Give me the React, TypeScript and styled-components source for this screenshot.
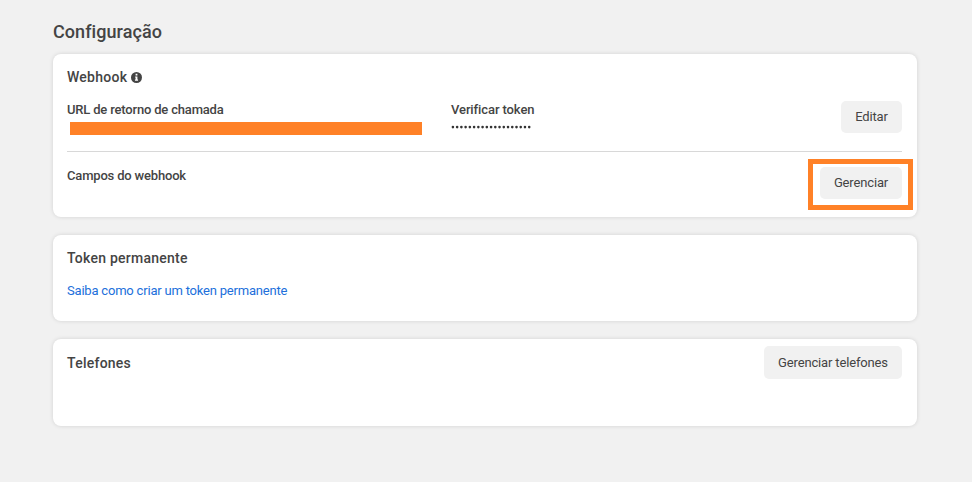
import React from "react";
import styled, { createGlobalStyle } from "styled-components";

const GlobalStyle = createGlobalStyle`
  *, *::before, *::after { box-sizing: border-box; }
  body {
    margin: 0;
    background: #f1f1f1;
    color: #444;
    font-family: Roboto, "Liberation Sans", sans-serif;
    font-size: 13px;
  }
`;

const Page = styled.main`
  min-height: 482px;
  padding: 20px 55px 0 53px;
`;

const PageTitle = styled.h1`
  margin: 0 0 10px;
  font-size: 18px;
  line-height: 24px;
  font-weight: 500;
  letter-spacing: 0.06px;
`;

const Card = styled.section<{ $height: number }>`
  height: ${(p) => p.$height}px;
  margin-bottom: 18px;
  padding: 0 15px 0 14px;
  background: #fff;
  border-radius: 8px;
  box-shadow: 0 0 4px rgba(0, 0, 0, 0.13);
`;

const CardTitle = styled.h2`
  display: flex;
  align-items: center;
  gap: 4px;
  margin: 0;
  padding-top: 13px;
  font-size: 14px;
  line-height: 20px;
  font-weight: 500;
  letter-spacing: 0.25px;
`;

const WebhookRow = styled.div`
  display: grid;
  grid-template-columns: 384px 1fr auto;
  height: 65px;
  padding-top: 14px;
  border-bottom: 1px solid #d8d8d8;
`;

const Label = styled.div`
  font-size: 13px;
  line-height: 18px;
  font-weight: 500;
  letter-spacing: -0.18px;
`;

const TokenLabel = styled(Label)`
  letter-spacing: -0.1px;
`;

const HiddenUrl = styled.div`
  width: 352px;
  height: 13px;
  margin: 3px 0 0 3px;
  background: #ff8127;
`;

const Secret = styled.svg`
  display: block;
  width: 82px;
  height: 4px;
  margin-top: 6px;
  fill: #333;
`;

const Button = styled.button<{ $width: number; $height?: number }>`
  flex: none;
  width: ${(p) => p.$width}px;
  height: ${(p) => p.$height ?? 32}px;
  padding: 0;
  border: 0;
  border-radius: 5px;
  background: #f1f1f1;
  color: #444;
  font: 400 13px/18px Roboto, "Liberation Sans", sans-serif;
  letter-spacing: -0.15px;
  white-space: nowrap;
`;

const FieldsRow = styled.div`
  display: flex;
  justify-content: space-between;
  align-items: flex-start;
  padding-top: 7px;
`;

const FieldsLabel = styled(Label)`
  padding-top: 8px;
`;

const Highlight = styled.div`
  width: 105px;
  height: 51px;
  margin-right: -11px;
  padding: 3px 0 0 7px;
  border: 5px solid #ff8127;
`;

const TokenLink = styled.a`
  display: inline-block;
  margin-top: 14px;
  color: #216fdb;
  line-height: 18px;
  letter-spacing: -0.2px;
  text-decoration: none;
`;

const PhonesHeader = styled.div`
  display: flex;
  justify-content: space-between;
  padding-top: 7px;

  ${CardTitle} {
    height: 33px;
    padding-top: 1px;
  }
`;

const InfoMark = styled.svg`
  display: block;
  width: 11px;
  height: 11px;
  margin-top: 1px;
`;

const InfoIcon = () => (
  <InfoMark viewBox="0 0 12 12" aria-hidden="true">
    <circle cx="6" cy="6" r="6" fill="#444" />
    <path d="M5 2h2v1.7H5zM4.5 4.9H7v3.4h.7v1.2H4.3V8.3H5V6.1h-.5z" fill="#fff" />
  </InfoMark>
);

export default function App() {
  return (
    <>
      <GlobalStyle />
      <Page>
        <PageTitle>Configuração</PageTitle>
        <Card $height={163}>
          <CardTitle>
            Webhook <InfoIcon />
          </CardTitle>
          <WebhookRow>
            <div>
              <Label>URL de retorno de chamada</Label>
              <HiddenUrl />
            </div>
            <div>
              <TokenLabel>Verificar token</TokenLabel>
              <Secret viewBox="0 0 82 4" aria-label="Token oculto">
                {Array.from({ length: 19 }, (_, i) => (
                  <circle key={i} cx={1.9 + i * 4.24} cy="2.1" r="1.3" />
                ))}
              </Secret>
            </div>
            <Button $width={61}>Editar</Button>
          </WebhookRow>
          <FieldsRow>
            <FieldsLabel>Campos do webhook</FieldsLabel>
            <Highlight>
              <Button $width={82}>Gerenciar</Button>
            </Highlight>
          </FieldsRow>
        </Card>
        <Card $height={86}>
          <CardTitle>Token permanente</CardTitle>
          <TokenLink>Saiba como criar um token permanente</TokenLink>
        </Card>
        <Card $height={87}>
          <PhonesHeader>
            <CardTitle>Telefones</CardTitle>
            <Button $width={138} $height={33}>Gerenciar telefones</Button>
          </PhonesHeader>
        </Card>
      </Page>
    </>
  );
}
